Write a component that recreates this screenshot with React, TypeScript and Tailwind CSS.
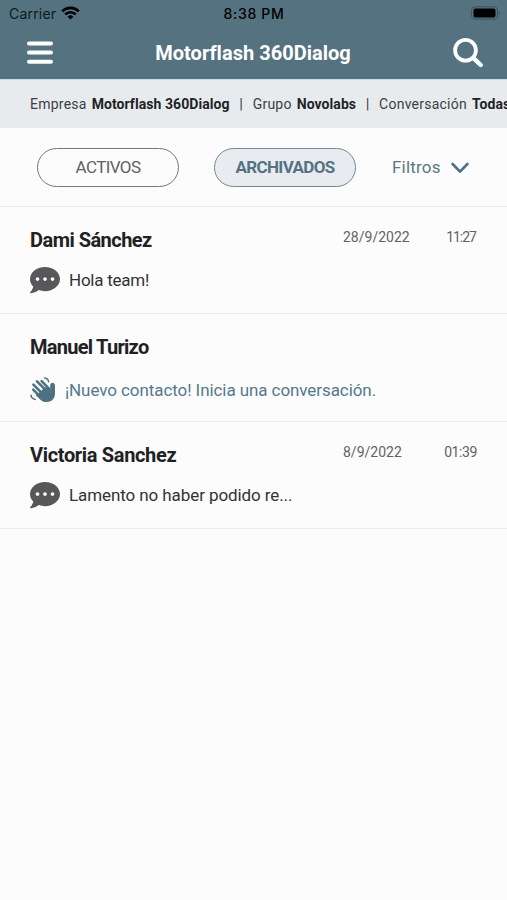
import type { ReactNode } from 'react';
import { FaCommentDots } from 'react-icons/fa';

interface Chat {
  name: string;
  message: string;
  date?: string;
  time?: string;
  isNew?: boolean;
  nameClass: string;
  messageClass: string;
  timeClass?: string;
}

const chats: Chat[] = [
  {
    name: 'Dami Sánchez',
    message: 'Hola team!',
    date: '28/9/2022',
    time: '11:27',
    nameClass: 'tracking-[-0.53px]',
    messageClass: 'tracking-[-0.25px]',
    timeClass: 'tracking-[-1px] pr-px',
  },
  {
    name: 'Manuel Turizo',
    message: '¡Nuevo contacto! Inicia una conversación.',
    isNew: true,
    nameClass: 'tracking-[-0.73px]',
    messageClass: 'tracking-[-0.08px]',
  },
  {
    name: 'Victoria Sanchez',
    message: 'Lamento no haber podido re...',
    date: '8/9/2022',
    time: '01:39',
    nameClass: 'tracking-[-0.34px]',
    messageClass: 'tracking-[-0.09px]',
    timeClass: 'tracking-[-0.4px]',
  },
];

function StatusBar() {
  return (
    <div className="grid h-[26px] grid-cols-3 items-center pl-[9px] pr-[6px] text-black">
      <div className="flex items-center gap-[5px]">
        <span className="font-[Inter,sans-serif] text-[14px] tracking-[0.2px] text-[#0c1a20]">Carrier</span>
        <svg width="19" height="14" viewBox="0 0 19 14" fill="none" stroke="currentColor" strokeWidth="2.6">
          <path d="M1.2 5.3a11.8 11.8 0 0 1 16.6 0" />
          <path d="M4.2 8.4a7.5 7.5 0 0 1 10.6 0" />
          <path d="M9.5 13.6 6.6 10.7a4.1 4.1 0 0 1 5.8 0z" fill="currentColor" stroke="none" />
        </svg>
      </div>
      <span className="pr-[2px] text-center font-[Inter,sans-serif] text-[14px] font-medium tracking-[0.7px]">
        8:38 PM
      </span>
      <svg className="justify-self-end" width="30" height="14" viewBox="0 0 30 14">
        <rect x="0.5" y="0.8" width="26" height="12.4" rx="3.6" fill="none" stroke="#2b3d46" strokeOpacity="0.6" />
        <rect x="2.5" y="2.6" width="22" height="8.8" rx="2" fill="#000" />
        <path d="M27.8 5v4c1.6-.6 1.6-3.4 0-4z" fill="#2b3d46" fillOpacity="0.6" />
      </svg>
    </div>
  );
}

function Header() {
  return (
    <header className="h-[79px] bg-[#54727f]">
      <StatusBar />
      <div className="flex h-[53px] items-center justify-between pl-[27px] pr-[23px] text-white">
        <svg width="26" height="24" viewBox="0 0 26 24" stroke="currentColor" strokeWidth="4" strokeLinecap="round">
          <path d="M2 2.4h22M2 11.6h22M2 20.8h22" />
        </svg>
        <h1 className="text-[20px] font-bold tracking-[0.02px]">Motorflash 360Dialog</h1>
        <svg width="31" height="30" viewBox="0 0 31 30" fill="none" stroke="currentColor" strokeLinecap="round">
          <circle cx="12.5" cy="12.3" r="10.4" strokeWidth="3.8" />
          <path d="m20.4 20.1 7.3 6.9" strokeWidth="4.4" />
        </svg>
      </div>
    </header>
  );
}

function Crumb({ label, children }: { label: string; children: ReactNode }) {
  return (
    <span className="flex gap-[5px]">
      <span className="tracking-[0.24px]">{label}</span>
      <b className="font-bold tracking-[0.07px] text-[#1f2326]">{children}</b>
    </span>
  );
}

function Divider() {
  return <span className="w-[23px] shrink-0 text-center text-[15px]">|</span>;
}

function ContextBar() {
  return (
    <div className="flex h-[49px] items-center overflow-hidden whitespace-nowrap border-t border-[#c9dbe3] bg-[#e8ebee] pl-[30px] pt-px text-[14px] text-[#3c4043]">
      <Crumb label="Empresa">Motorflash 360Dialog</Crumb>
      <Divider />
      <Crumb label="Grupo">Novolabs</Crumb>
      <Divider />
      <Crumb label="Conversación">Todas</Crumb>
    </div>
  );
}

function Tabs() {
  return (
    <div className="flex h-[79px] items-center border-b border-[#ededef] pl-[37px] pt-px">
      <button className="h-[39px] w-[142px] rounded-full border-[1.5px] border-[#77777a] text-[17px] tracking-[-0.6px] text-[#616164]">
        ACTIVOS
      </button>
      <button className="ml-[35px] h-[39px] w-[142px] rounded-full border-[1.5px] border-[#6f8b98] bg-[#e8ecf0] text-[17px] font-bold tracking-[-0.65px] text-[#54727f]">
        ARCHIVADOS
      </button>
      <button className="ml-9 flex items-center gap-[10px] text-[17px] tracking-[0.2px] text-[#5b7885]">
        <span>Filtros</span>
        <svg className="mt-px" width="18" height="12" viewBox="0 0 18 12" fill="none" stroke="#4b7083" strokeWidth="2.6" strokeLinecap="round" strokeLinejoin="round">
          <path d="m1.6 2 7.4 7.6L16.4 2" />
        </svg>
      </button>
    </div>
  );
}

function WavingHand() {
  return (
    <svg width="26" height="26" viewBox="0 0 26 26" fill="none" stroke="#4c7282" strokeLinecap="round">
      <path d="M10 15 15 10l5.2 2.4V8.2c0-1.5 1-2.5 2.4-2.5s2.4 1 2.4 2.5v8.3c0 5-3.6 8.5-8.5 8.5-2.8 0-4.8-1-6.4-2.6L5.6 18z" fill="#4c7282" stroke="none" />
      <path d="m3.2 12.6 6.5 6.5M3.4 7.6l9 9M7 4.4l9 9M11.6 4.2l7.6 7.6" strokeWidth="2.6" />
      <path d="M14.6 1c2.3.2 3.7 1.5 4 3.8M1 18.2c.3 2.5 1.8 3.9 4.2 4.2" strokeWidth="1.5" />
    </svg>
  );
}

function ChatRow({ chat }: { chat: Chat }) {
  return (
    <li className="h-[107.4px] border-b border-[#ededef] px-[30px] pt-[21px]">
      <div className="flex items-start">
        <h2 className={`w-[313px] text-[20px] leading-6 font-bold text-[#1f2124] ${chat.nameClass}`}>{chat.name}</h2>
        <div className="flex flex-1 justify-between text-[14px] leading-[18px] text-[#626266]">
          <span>{chat.date}</span>
          <span className={chat.timeClass}>{chat.time}</span>
        </div>
      </div>
      {chat.isNew ? (
        <div className="mt-[17px] flex h-7 items-center gap-[9px] text-[17px] text-[#54798a]">
          <WavingHand />
          <span className={chat.messageClass}>{chat.message}</span>
        </div>
      ) : (
        <div className="mt-[14px] flex h-7 items-center gap-[9px] text-[17px] text-[#333335]">
          <FaCommentDots size={30} color="#58585a" />
          <span className={`pt-px ${chat.messageClass}`}>{chat.message}</span>
        </div>
      )}
    </li>
  );
}

export default function App() {
  return (
    <div className="h-[900px] w-[507px] overflow-hidden bg-[#fcfcfc] font-[Roboto,sans-serif]">
      <Header />
      <ContextBar />
      <Tabs />
      <ul>
        {chats.map((chat) => (
          <ChatRow key={chat.name} chat={chat} />
        ))}
      </ul>
    </div>
  );
}
